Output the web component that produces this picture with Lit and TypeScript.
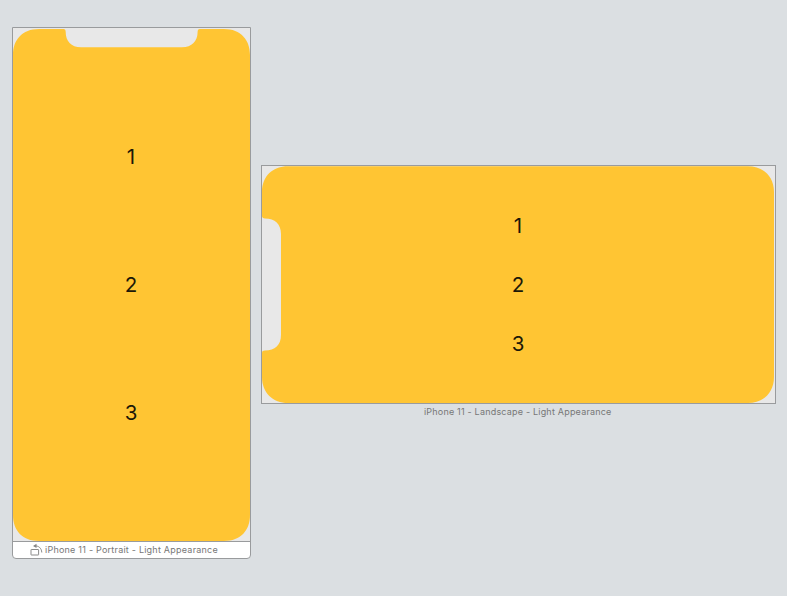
import { LitElement, html, svg, css } from "lit";
import { customElement, property } from "lit/decorators.js";

const PORTRAIT =
  "M0 27C0 12 9 1 26 1H50.5Q52.7 1 52.7 4C52.7 13 58 19.3 68 19.3H169C179 19.3 184.6 13 184.6 4Q184.6 1 186.8 1H211C228 1 237 12 237 27V487C237 502 228 513 211 513H26C9 513 0 502 0 487Z";
const LANDSCAPE =
  "M26 .3H486C501 .3 512 10 512 26V211C512 227 501 237 486 237H26C11 237 0 227 0 211V187Q0 184.6 3 184.6C13 184.6 19 179 19 169V68C19 58 13 52.4 3 52.4Q0 52.4 0 50V26C0 10 11 .3 26 .3Z";

@customElement("device-screen")
class DeviceScreen extends LitElement {
  @property() orientation = "portrait";
  static styles = css`
    :host { display: grid; background: #e8e8e8; }
    svg, .rows { grid-area: 1 / 1; display: block; }
    .rows { display: flex; flex-direction: column; align-items: center; padding-right: 1px;
      font: 20.5px/24px Inter, sans-serif; color: #1c1808; }
    .portrait { gap: 104px; padding-top: 117px; }
    .landscape { gap: 35px; padding-top: 48px; }
  `;
  render() {
    const p = this.orientation === "portrait";
    const w = p ? 237 : 513, h = p ? 513 : 237;
    return html`
      <svg width=${w} height=${h} viewBox="0 0 ${w} ${h}">
        ${svg`<path fill="#ffc533" d=${p ? PORTRAIT : LANDSCAPE} />`}
      </svg>
      <div class="rows ${this.orientation}">
        <span>1</span><span>2</span><span>3</span>
      </div>`;
  }
}

@customElement("app-root")
class AppRoot extends LitElement {
  static styles = css`
    :host { display: flex; align-items: flex-start; gap: 10px; box-sizing: border-box;
      height: 596px; padding: 27px 0 0 12px; background: #dbdfe2; overflow: hidden;
      font: 9px/16px Inter, sans-serif; color: #777; }
    .selected { border: 1px solid #999b9d; border-radius: 0 0 4px 4px; background: #fff;
      overflow: hidden; width: 237px; }
    .bar { display: flex; height: 16px; border-top: 1px solid #999b9d; padding-left: 16px; }
    .bar svg { display: block; width: 16px; height: 16px; }
    .label { white-space: pre; letter-spacing: 0.23px; }
    .wide { width: 515px; margin-top: 138px; }
    .frame { border: 1px solid #999b9d; }
    .wide .label { text-align: center; padding-right: 1.5px; letter-spacing: 0.2px; }
  `;
  render() {
    return html`
      <div class="selected">
        <device-screen orientation="portrait"></device-screen>
        <div class="bar">
          <svg viewBox="0 0 16 16" fill="none" stroke="#8a8a8a">
            <rect x="2" y="7.5" width="7.6" height="5.5" rx=".3" />
            <path d="M5.5 4C9.5 3.5 12.5 6 12.8 10.5" />
            <path d="M7.5 1.8V6L4 3.9Z" fill="#858585" stroke="none" />
          </svg>
          <span class="label">iPhone 11 - Portrait - Light Appearance</span>
        </div>
      </div>
      <div class="wide">
        <div class="frame"><device-screen orientation="landscape"></device-screen></div>
        <div class="label">iPhone 11 - Landscape - Light Appearance</div>
      </div>`;
  }
}
